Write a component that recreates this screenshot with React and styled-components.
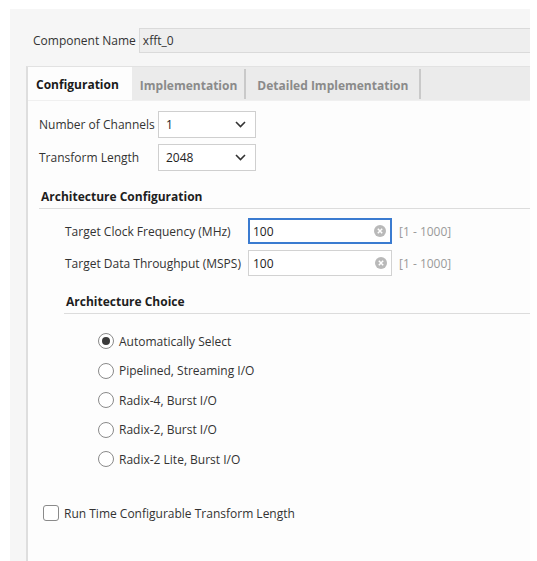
import React from "react";
import styled, { createGlobalStyle } from "styled-components";

const Global = createGlobalStyle`
  html, body {
    margin: 0;
    padding: 0;
    background: #ffffff;
    font-family: "Open Sans", "Noto Sans", "Liberation Sans", sans-serif;
    font-size: 12px;
    color: #333;
  }
`;

const Page = styled.div`
  width: 537px;
  height: 561px;
  padding: 9px 0 0 10px;
  box-sizing: border-box;
  overflow: hidden;
  background: #fff;
`;

const Panel = styled.div`
  width: 520px;
  height: 552px;
  background: #f6f6f6;
  overflow: hidden;
  padding-top: 19px;
  box-sizing: border-box;
  display: flex;
  flex-direction: column;
`;

const NameRow = styled.div`
  display: flex;
  align-items: center;
  padding-left: 23px;
  gap: 3px;
`;

const Label = styled.span`
  white-space: nowrap;
  color: #333;
  width: ${(p) => (p.w ? p.w + "px" : "auto")};
  flex-shrink: 0;
`;

const NameInput = styled.div`
  flex: 1;
  height: 25px;
  box-sizing: border-box;
  background: #eeeeee;
  border: 1px solid #dadada;
  border-right: none;
  display: flex;
  align-items: center;
  padding-left: 3px;
  color: #333;
`;

const TabFrame = styled.div`
  margin: 13px 0 0 16px;
  border-left: 2px solid #dedede;
  border-top: 1px solid #e2e2e2;
  flex: 1;
  background: #fdfdfd;
`;

const TabBar = styled.div`
  display: flex;
  height: 33px;
  background: #ebebeb;
  border-bottom: 1px solid #f0f0f0;
`;

const Tab = styled.div`
  display: flex;
  align-items: center;
  padding: 2px ${(p) => p.pr}px 0 ${(p) => p.pl}px;
  font-weight: 700;
  background: ${(p) => (p.active ? "#fdfdfd" : "transparent")};
  color: ${(p) => (p.active ? "#1a1a1a" : "#8a8a8a")};
  border-right: ${(p) => (p.sep ? "2px solid #c9c9c9" : "none")};
  margin: ${(p) => (p.sep ? "2px 0 1px" : "0")};
  white-space: nowrap;
`;

const Body = styled.div`
  padding: 10px 0 0 11px;
`;

const TopRows = styled.div`
  display: flex;
  flex-direction: column;
  gap: 6px;
`;

const Row = styled.div`
  display: flex;
  align-items: center;
`;

const Select = styled.div`
  width: 98px;
  height: 27px;
  box-sizing: border-box;
  border: 1px solid #cfcfcf;
  background: #fff;
  display: flex;
  align-items: center;
  justify-content: space-between;
  padding: 0 9px 0 7px;
  color: #222;
`;

const SectionTitle = styled.div`
  font-weight: 700;
  color: #1e1e1e;
  margin-left: ${(p) => p.indent || 0}px;
  margin-top: ${(p) => p.top}px;
  padding: 0 0 3px 2px;
  border-bottom: 1px solid #dcdcdc;
`;

const Fields = styled.div`
  display: flex;
  flex-direction: column;
  gap: 6px;
  padding: 9px 0 0 26px;
`;

const TextField = styled.div`
  width: 144px;
  height: 26px;
  box-sizing: border-box;
  border: ${(p) => (p.focus ? "2px solid #3a7bd0" : "1px solid #d2d2d2")};
  padding-left: ${(p) => (p.focus ? "3px" : "4px")};
  background: #fff;
  display: flex;
  align-items: center;
  justify-content: space-between;
  padding-right: 4px;
  color: #222;
`;

const Range = styled.span`
  color: #9a9a9a;
  margin-left: 7px;
`;

const Radios = styled.div`
  display: flex;
  flex-direction: column;
  gap: 9px;
  padding: 17px 0 0 59px;
`;

const RadioRow = styled.label`
  display: flex;
  align-items: center;
  gap: 5px;
  height: 20.5px;
  color: #333;
`;

const RadioDot = styled.span`
  width: 16px;
  height: 16px;
  border-radius: 50%;
  border: 1px solid #8a8a8a;
  box-sizing: border-box;
  display: flex;
  align-items: center;
  justify-content: center;
  background: #fff;
  &::after {
    content: "";
    display: ${(p) => (p.on ? "block" : "none")};
    width: 8px;
    height: 8px;
    border-radius: 50%;
    background: #3a3a3a;
  }
`;

const CheckRow = styled.label`
  display: flex;
  align-items: center;
  gap: 5px;
  margin: 35px 0 0 4px;
`;

const CheckBox = styled.span`
  width: 16px;
  height: 16px;
  border: 1px solid #8a8a8a;
  border-radius: 3px;
  box-sizing: border-box;
  background: #fff;
`;

const Chevron = () => (
  <svg width="11" height="7" viewBox="0 0 11 7">
    <path d="M1 1l4.5 4.5L10 1" fill="none" stroke="#333" strokeWidth="1.6" />
  </svg>
);

const ClearIcon = () => (
  <svg width="12" height="12" viewBox="0 0 12 12">
    <circle cx="6" cy="6" r="6" fill="#b9b9b9" />
    <path d="M3.8 3.8l4.4 4.4M8.2 3.8l-4.4 4.4" stroke="#fff" strokeWidth="1.5" />
  </svg>
);

const radios = [
  "Automatically Select",
  "Pipelined, Streaming I/O",
  "Radix-4, Burst I/O",
  "Radix-2, Burst I/O",
  "Radix-2 Lite, Burst I/O",
];

export default function App() {
  return (
    <>
      <Global />
      <Page>
        <Panel>
          <NameRow>
            <Label>Component Name</Label>
            <NameInput>xfft_0</NameInput>
          </NameRow>
          <TabFrame>
            <TabBar>
              <Tab active pl={8} pr={13}>Configuration</Tab>
              <Tab sep pl={8} pr={7}>Implementation</Tab>
              <Tab sep pl={11} pr={11}>Detailed Implementation</Tab>
            </TabBar>
            <Body>
              <TopRows>
                <Row>
                  <Label w={119}>Number of Channels</Label>
                  <Select>
                    1
                    <Chevron />
                  </Select>
                </Row>
                <Row>
                  <Label w={119}>Transform Length</Label>
                  <Select>
                    2048
                    <Chevron />
                  </Select>
                </Row>
              </TopRows>
              <SectionTitle top={17}>Architecture Configuration</SectionTitle>
              <Fields>
                <Row>
                  <Label w={183}>Target Clock Frequency (MHz)</Label>
                  <TextField focus>
                    100
                    <ClearIcon />
                  </TextField>
                  <Range>[1 - 1000]</Range>
                </Row>
                <Row>
                  <Label w={183}>Target Data Throughput (MSPS)</Label>
                  <TextField>
                    100
                    <ClearIcon />
                  </TextField>
                  <Range>[1 - 1000]</Range>
                </Row>
              </Fields>
              <SectionTitle top={17} indent={25}>
                Architecture Choice
              </SectionTitle>
              <Radios>
                {radios.map((r, i) => (
                  <RadioRow key={r}>
                    <RadioDot on={i === 0} />
                    {r}
                  </RadioRow>
                ))}
              </Radios>
              <CheckRow>
                <CheckBox />
                Run Time Configurable Transform Length
              </CheckRow>
            </Body>
          </TabFrame>
        </Panel>
      </Page>
    </>
  );
}
